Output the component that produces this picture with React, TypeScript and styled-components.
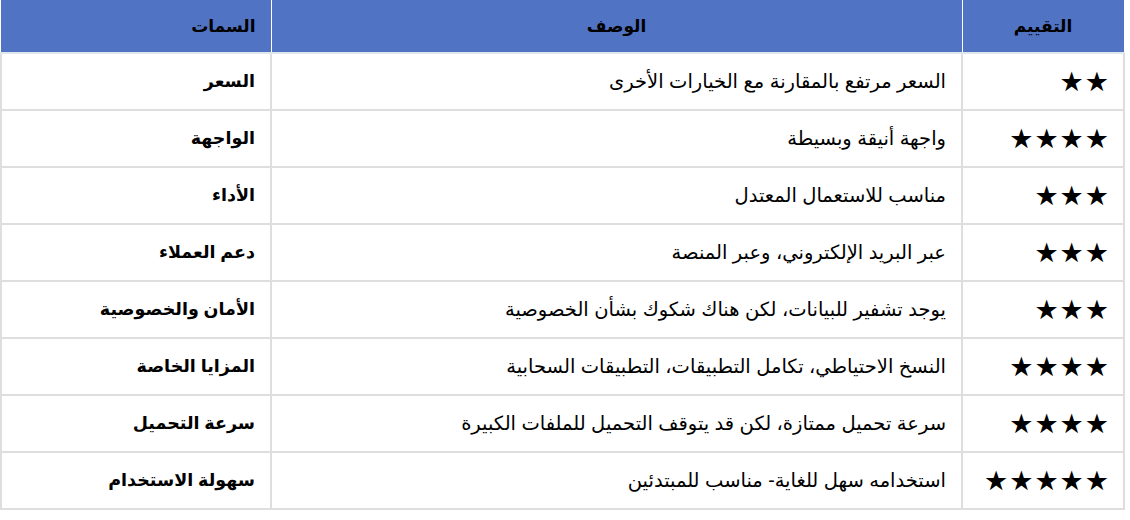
import { FC } from 'react';
import styled, { createGlobalStyle } from 'styled-components';

const GlobalStyle = createGlobalStyle`
  html, body {
    margin: 0;
    padding: 0;
    background: #fff;
  }
  body {
    font-family: 'Liberation Sans', Arial, 'DejaVu Sans', sans-serif;
    color: #000;
  }
`;

const StyledTable = styled.table`
  width: 1123px;
  border-collapse: collapse;
  table-layout: fixed;
  direction: rtl;
  font-size: 16px;
`;

const HeadCell = styled.th<{ $align: 'right' | 'center' }>`
  height: 52px;
  padding: 0 15px;
  background-color: #5073c4;
  border: 1px solid #fff;
  border-top: none;
  border-bottom: 2px solid #dfe6ee;
  font-weight: bold;
  font-size: 17px;
  text-align: ${({ $align }) => $align};
  vertical-align: middle;
  &:last-child {
    border-left: 1px solid #5073c4;
  }
`;

const Cell = styled.td<{ $bold?: boolean }>`
  height: 55px;
  padding: 0 15px;
  border: 2px solid #dedede;
  text-align: right;
  vertical-align: middle;
  font-weight: ${({ $bold }) => ($bold ? 'bold' : 'normal')};
  font-size: ${({ $bold }) => ($bold ? '17.5px' : '19.5px')};
`;

const Stars = styled.span`
  font-family: 'DejaVu Sans', sans-serif;
  font-size: 27px;
  letter-spacing: 1px;
  line-height: 1;
  margin-right: -2px;
`;

interface Row {
  rating: number;
  description: string;
  feature: string;
}

const rows: Row[] = [
  { rating: 2, description: 'السعر مرتفع بالمقارنة مع الخيارات الأخرى', feature: 'السعر' },
  { rating: 4, description: 'واجهة أنيقة وبسيطة', feature: 'الواجهة' },
  { rating: 3, description: 'مناسب للاستعمال المعتدل', feature: 'الأداء' },
  { rating: 3, description: 'عبر البريد الإلكتروني، وعبر المنصة', feature: 'دعم العملاء' },
  { rating: 3, description: 'يوجد تشفير للبيانات، لكن هناك شكوك بشأن الخصوصية', feature: 'الأمان والخصوصية' },
  { rating: 4, description: 'النسخ الاحتياطي، تكامل التطبيقات، التطبيقات السحابية', feature: 'المزايا الخاصة' },
  { rating: 4, description: 'سرعة تحميل ممتازة، لكن قد يتوقف التحميل للملفات الكبيرة', feature: 'سرعة التحميل' },
  { rating: 5, description: 'استخدامه سهل للغاية- مناسب للمبتدئين', feature: 'سهولة الاستخدام' }
];

const App: FC = () => {
  return (
    <>
      <GlobalStyle />
      <StyledTable>
        <colgroup>
          <col style={{ width: 162 }} />
          <col style={{ width: 691 }} />
          <col style={{ width: 270 }} />
        </colgroup>
        <thead>
          <tr>
            <HeadCell $align="center">التقييم</HeadCell>
            <HeadCell $align="center">الوصف</HeadCell>
            <HeadCell $align="right">السمات</HeadCell>
          </tr>
        </thead>
        <tbody>
          {rows.map((row, index) => (
            <tr key={index}>
              <Cell>
                <Stars>{'★'.repeat(row.rating)}</Stars>
              </Cell>
              <Cell>{row.description}</Cell>
              <Cell $bold>{row.feature}</Cell>
            </tr>
          ))}
        </tbody>
      </StyledTable>
    </>
  );
};

export default App;
